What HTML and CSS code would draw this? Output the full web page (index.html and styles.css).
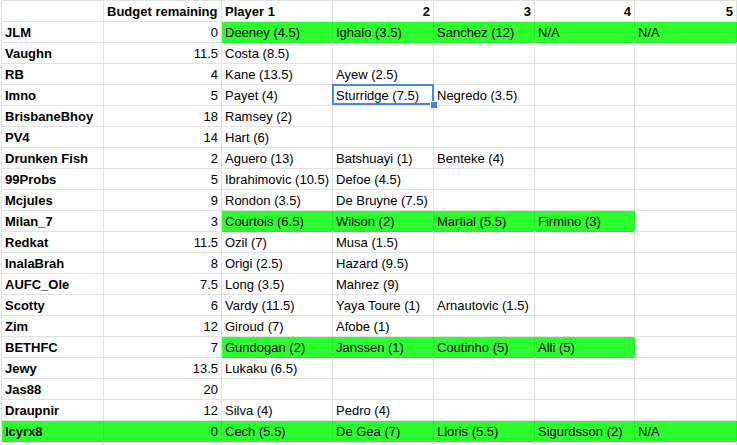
FILE: index.html
```html
<!DOCTYPE html>
<html>
<head>
<meta charset="utf-8">
<link rel="stylesheet" href="styles.css">
</head>
<body>
<div class="sheet">
  <div class="c"></div><div class="c b">Budget remaining</div><div class="c b">Player 1</div><div class="c b r">2</div><div class="c b r">3</div><div class="c b r">4</div><div class="c b r">5</div>

  <div class="c b">JLM</div><div class="c r">0</div><div class="c g">Deeney (4.5)</div><div class="c g">Ighalo (3.5)</div><div class="c g">Sanchez (12)</div><div class="c g">N/A</div><div class="c g">N/A</div>

  <div class="c b">Vaughn</div><div class="c r">11.5</div><div class="c">Costa (8.5)</div><div class="c"></div><div class="c"></div><div class="c"></div><div class="c"></div>

  <div class="c b">RB</div><div class="c r">4</div><div class="c">Kane (13.5)</div><div class="c">Ayew (2.5)</div><div class="c"></div><div class="c"></div><div class="c"></div>

  <div class="c b">Imno</div><div class="c r">5</div><div class="c">Payet (4)</div><div class="c sel">Sturridge (7.5)<span class="handle"></span></div><div class="c">Negredo (3.5)</div><div class="c"></div><div class="c"></div>

  <div class="c b">BrisbaneBhoy</div><div class="c r">18</div><div class="c">Ramsey (2)</div><div class="c"></div><div class="c"></div><div class="c"></div><div class="c"></div>

  <div class="c b">PV4</div><div class="c r">14</div><div class="c">Hart (6)</div><div class="c"></div><div class="c"></div><div class="c"></div><div class="c"></div>

  <div class="c b">Drunken Fish</div><div class="c r">2</div><div class="c">Aguero (13)</div><div class="c">Batshuayi (1)</div><div class="c">Benteke (4)</div><div class="c"></div><div class="c"></div>

  <div class="c b">99Probs</div><div class="c r">5</div><div class="c">Ibrahimovic (10.5)</div><div class="c">Defoe (4.5)</div><div class="c"></div><div class="c"></div><div class="c"></div>

  <div class="c b">Mcjules</div><div class="c r">9</div><div class="c">Rondon (3.5)</div><div class="c">De Bruyne (7.5)</div><div class="c"></div><div class="c"></div><div class="c"></div>

  <div class="c b">Milan_7</div><div class="c r">3</div><div class="c g">Courtois (6.5)</div><div class="c g">Wilson (2)</div><div class="c g">Martial (5.5)</div><div class="c g">Firmino (3)</div><div class="c"></div>

  <div class="c b">Redkat</div><div class="c r">11.5</div><div class="c">Ozil (7)</div><div class="c">Musa (1.5)</div><div class="c"></div><div class="c"></div><div class="c"></div>

  <div class="c b">InalaBrah</div><div class="c r">8</div><div class="c">Origi (2.5)</div><div class="c">Hazard (9.5)</div><div class="c"></div><div class="c"></div><div class="c"></div>

  <div class="c b">AUFC_Ole</div><div class="c r">7.5</div><div class="c">Long (3.5)</div><div class="c">Mahrez (9)</div><div class="c"></div><div class="c"></div><div class="c"></div>

  <div class="c b">Scotty</div><div class="c r">6</div><div class="c">Vardy (11.5)</div><div class="c">Yaya Toure (1)</div><div class="c">Arnautovic (1.5)</div><div class="c"></div><div class="c"></div>

  <div class="c b">Zim</div><div class="c r">12</div><div class="c">Giroud (7)</div><div class="c">Afobe (1)</div><div class="c"></div><div class="c"></div><div class="c"></div>

  <div class="c b">BETHFC</div><div class="c r">7</div><div class="c g">Gundogan (2)</div><div class="c g">Janssen (1)</div><div class="c g">Coutinho (5)</div><div class="c g">Alli (5)</div><div class="c"></div>

  <div class="c b">Jewy</div><div class="c r">13.5</div><div class="c">Lukaku (6.5)</div><div class="c"></div><div class="c"></div><div class="c"></div><div class="c"></div>

  <div class="c b">Jas88</div><div class="c r">20</div><div class="c"></div><div class="c"></div><div class="c"></div><div class="c"></div><div class="c"></div>

  <div class="c b">Draupnir</div><div class="c r">12</div><div class="c">Silva (4)</div><div class="c">Pedro (4)</div><div class="c"></div><div class="c"></div><div class="c"></div>

  <div class="c b g">Icyrx8</div><div class="c r g">0</div><div class="c g">Cech (5.5)</div><div class="c g">De Gea (7)</div><div class="c g">Lloris (5.5)</div><div class="c g">Sigurdsson (2)</div><div class="c g">N/A</div>

  <div class="c"></div><div class="c"></div><div class="c"></div><div class="c"></div><div class="c"></div><div class="c"></div><div class="c"></div>
</div>
</body>
</html>
```

FILE: styles.css
```css
html, body {
  margin: 0;
  padding: 0;
  background: #ffffff;
}

body {
  font-family: "Liberation Sans", Arial, sans-serif;
  font-size: 13px;
  color: #000000;
  overflow: hidden;
}

.sheet {
  display: grid;
  grid-template-columns: 101px 117px 110px 100px 100px 99px 101px;
  grid-auto-rows: 20px;
  gap: 1px;
  padding: 1px;
  margin-left: 1px;
  width: max-content;
  background: #e2e2e2;
}

.c {
  position: relative;
  background: #ffffff;
  padding: 1px 3px 0 3px;
  line-height: 20px;
  height: 19px;
  white-space: nowrap;
  overflow: visible;
}

.b {
  font-weight: bold;
}

.r {
  text-align: right;
}

.g {
  background: #2bfd2e;
  box-shadow: 1px 0 0 #27e82a, 0 1px 0 #27e82a;
}

.sel {
  box-shadow: inset 0 0 0 2px #4a86e8;
  margin: -1px;
  padding: 2px 4px 0 4px;
  height: 19px;
  z-index: 2;
}

.handle {
  position: absolute;
  right: -4px;
  bottom: -4px;
  width: 6px;
  height: 6px;
  background: #4a86e8;
  border: 1px solid #ffffff;
}
```
